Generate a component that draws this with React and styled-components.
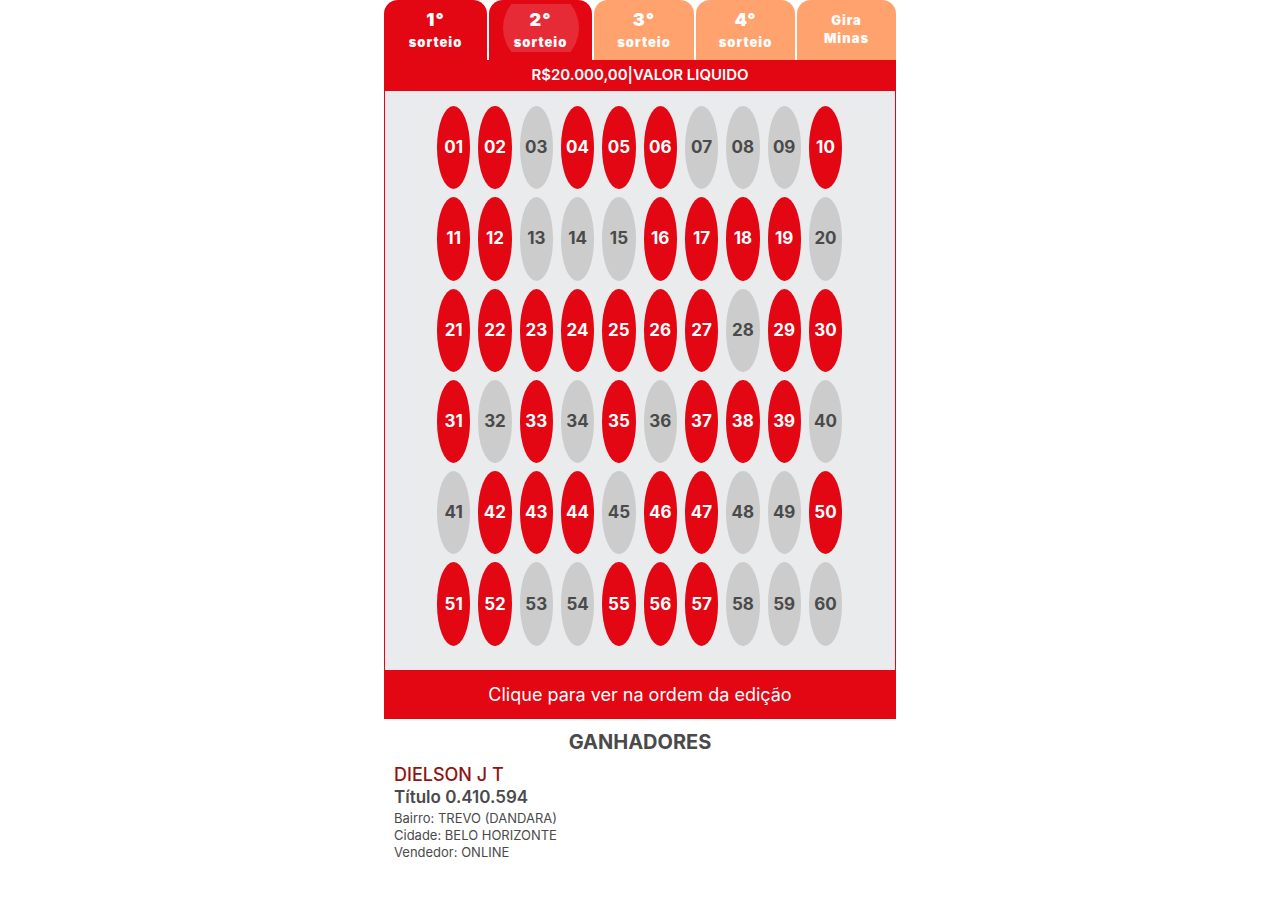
import React, { useState } from "react";
import styled, { createGlobalStyle } from "styled-components";

const RED = "#e30613";
const GRAY = "#4a4a4a";

const GlobalStyle = createGlobalStyle`
  *, *::before, *::after { box-sizing: border-box; }
  body {
    margin: 0;
    background: #fff;
    color: ${GRAY};
    font-family: Inter, "Open Sans", sans-serif;
  }
  button { font-family: inherit; }
`;

const Page = styled.main`
  width: 40%;
  min-width: 320px;
  margin: 0 auto;
`;

const Tabs = styled.nav`
  display: grid;
  grid-template-columns: 103fr 103fr 100fr 99fr 99fr;
  gap: 2px;
  height: 60px;
`;

const Tab = styled.button`
  display: flex;
  justify-content: center;
  align-items: flex-start;
  min-width: 0;
  padding: 4px 6px 8px;
  border: 0;
  border-radius: 14px 14px 0 0;
  background: ${({ $drawn }) => ($drawn ? RED : "#ffa26e")};
  color: #fff;
  cursor: pointer;
`;

const TabLabel = styled.span`
  position: relative;
  display: flex;
  flex-direction: column;
  align-items: center;
  width: 100%;
  height: 48px;
  padding-top: ${({ $small }) => ($small ? "7px" : "5px")};
  overflow: hidden;
  font-size: 13px;
  font-weight: 900;
  letter-spacing: 1px;
  line-height: 18px;
`;

const Ordinal = styled.span`
  margin-bottom: 2px;
  font-size: 18px;
  line-height: 22px;
`;

const Ripple = styled.span`
  position: absolute;
  top: 50%;
  left: 50%;
  width: 76px;
  height: 76px;
  border-radius: 50%;
  background: rgba(255, 255, 255, 0.15);
  transform: translate(-50%, -50%);
`;

const Prize = styled.h2`
  margin: 0;
  padding: 4px 8px 5px;
  background: ${RED};
  color: #fff;
  font-size: 15px;
  font-weight: 600;
  line-height: 22px;
  text-align: center;
`;

const Board = styled.section`
  display: grid;
  grid-template-columns: repeat(10, 1fr);
  gap: 8px;
  padding: 15px 53px 24px 52px;
  border: solid ${RED};
  border-width: 0 1px;
  background: #eaebed;
`;

const Ball = styled.span`
  display: flex;
  align-items: center;
  justify-content: center;
  aspect-ratio: 2 / 5;
  padding-bottom: 1px;
  border-radius: 50%;
  background: ${({ $hit }) => ($hit ? RED : "#cccccc")};
  color: ${({ $hit }) => ($hit ? "#fff" : GRAY)};
  font-size: 17px;
  font-weight: 700;
`;

const OrderButton = styled.button`
  display: block;
  width: 100%;
  padding: 13px 8px 12px;
  border: 0;
  background: ${RED};
  color: #fff;
  font-size: 18px;
  font-weight: 400;
  line-height: 24px;
  cursor: pointer;
`;

const Title = styled.h3`
  margin: 10px 0 9px;
  font-size: 20px;
  font-weight: 700;
  line-height: 26px;
  text-align: center;
`;

const Winner = styled.article`
  padding: 0 10px;
`;

const Name = styled.h4`
  margin: 0;
  color: #8f1414;
  font-size: 18px;
  font-weight: 500;
  line-height: 22px;
`;

const Ticket = styled.p`
  margin: 0 0 2px;
  font-size: 17px;
  font-weight: 600;
  line-height: 22px;
`;

const Detail = styled.p`
  margin: 0;
  font-size: 13px;
  line-height: 17px;
`;

const DRAWN = new Set([
  1, 2, 4, 5, 6, 10, 11, 12, 16, 17, 18, 19, 21, 22, 23, 24, 25, 26, 27, 29,
  30, 31, 33, 35, 37, 38, 39, 42, 43, 44, 46, 47, 50, 51, 52, 55, 56, 57,
]);

const NUMBERS = Array.from({ length: 60 }, (_, i) => i + 1);

const ROUNDS = [
  { ordinal: "1°", drawn: true },
  { ordinal: "2°", drawn: true },
  { ordinal: "3°", drawn: false },
  { ordinal: "4°", drawn: false },
];

export default function App() {
  const [current, setCurrent] = useState("2°");

  return (
    <>
      <GlobalStyle />
      <Page>
        <Tabs>
          {ROUNDS.map(({ ordinal, drawn }) => (
            <Tab
              key={ordinal}
              type="button"
              $drawn={drawn}
              onClick={() => setCurrent(ordinal)}
            >
              <TabLabel>
                {current === ordinal && <Ripple />}
                <Ordinal>{ordinal}</Ordinal>
                <span>sorteio</span>
              </TabLabel>
            </Tab>
          ))}
          <Tab type="button" onClick={() => setCurrent("gira")}>
            <TabLabel $small>
              {current === "gira" && <Ripple />}
              <span>Gira</span>
              <span>Minas</span>
            </TabLabel>
          </Tab>
        </Tabs>
        <Prize>R$20.000,00|VALOR LIQUIDO</Prize>
        <Board>
          {NUMBERS.map((n) => (
            <Ball key={n} $hit={DRAWN.has(n)}>
              {String(n).padStart(2, "0")}
            </Ball>
          ))}
        </Board>
        <OrderButton type="button">
          Clique para ver na ordem da edição
        </OrderButton>
        <Title>GANHADORES</Title>
        <Winner>
          <Name>DIELSON J T</Name>
          <Ticket>Título 0.410.594</Ticket>
          <Detail>Bairro: TREVO (DANDARA)</Detail>
          <Detail>Cidade: BELO HORIZONTE</Detail>
          <Detail>Vendedor: ONLINE</Detail>
        </Winner>
      </Page>
    </>
  );
}
